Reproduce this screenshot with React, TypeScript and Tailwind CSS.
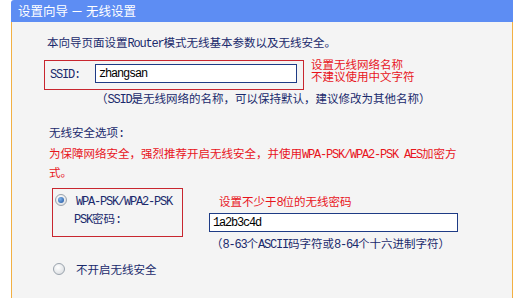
import React from "react";

function T({ s }: { s: string }) {
  const parts = s.split(/([\x20-\x7e]+)/);
  return (
    <>
      {parts.map((p, i) =>
        /^[\x20-\x7e]+$/.test(p) ? (
          <span key={i} className="font-['Liberation_Mono'] text-[12px] leading-none tracking-[-1.2px]">
            {p}
          </span>
        ) : (
          <React.Fragment key={i}>{p}</React.Fragment>
        )
      )}
    </>
  );
}

function Radio({ checked }: { checked?: boolean }) {
  return (
    <span className="flex h-[12px] w-[12px] shrink-0 items-center justify-center rounded-full border border-[#9aa3ad] bg-[radial-gradient(circle_at_40%_35%,#ffffff,#d4d8dc)]">
      {checked ? (
        <span className="h-[6px] w-[6px] rounded-full bg-[radial-gradient(circle_at_35%_35%,#7fb4ec,#1d4f9a)]" />
      ) : null}
    </span>
  );
}

export default function App() {
  return (
    <div className="h-[298px] w-[523px] overflow-hidden bg-white font-['Noto_Sans_CJK_SC',sans-serif] text-[11.5px] text-[#1a2a6c]">
      <div className="ml-[11px] flex h-[298px] w-[502px] flex-col">
        <div className="flex h-[22px] items-center rounded-tl-[3px] bg-[#5d8df3] pl-[7px] text-[12.5px] leading-none text-white">
          设置向导 － 无线设置
        </div>
        <div className="flex flex-1 flex-col border-l border-r border-[#f2b043] bg-[#f4f4f4]">
          <div className="ml-[35px] mt-[12px] h-[16px] leading-[16px]">
            <T s="本向导页面设置Router模式无线基本参数以及无线安全。" />
          </div>
          <div className="mt-[10px] flex items-start">
            <div className="ml-[32px] flex h-[30px] w-[260px] items-start border border-[#c8262f] pl-[5px] pt-[3px]">
              <span className="mt-[1px] h-[16px] w-[45px] leading-[16px]">
                <T s="SSID:" />
              </span>
              <div className="flex h-[19px] w-[202px] items-center border border-[#1e3b85] bg-white pl-[3px] leading-none text-black">
                <T s="zhangsan" />
              </div>
            </div>
            <div className="ml-[7px] mt-[-2px] text-[11.5px] leading-[12px] text-[#e8141c]">
              <div className="h-[12px]">设置无线网络名称</div>
              <div className="h-[12px]">不建议使用中文字符</div>
            </div>
          </div>
          <div className="ml-[84px] h-[16px] leading-[16px]">
            <T s="（SSID是无线网络的名称，可以保持默认，建议修改为其他名称）" />
          </div>
          <div className="ml-[37px] mt-[18px] h-[16px] leading-[16px]">
            <T s="无线安全选项:" />
          </div>
          <div className="ml-[37px] mt-[4px] text-[#e8141c]">
            <div className="h-[19px] leading-[19px]">
              <T s="为保障网络安全，强烈推荐开启无线安全，并使用WPA-PSK/WPA2-PSK AES加密方" />
            </div>
            <div className="h-[19px] leading-[19px]">式。</div>
          </div>
          <div className="mt-[6px] flex items-start">
            <div className="ml-[40px] flex h-[49px] w-[131px] flex-col border border-[#c8262f] pl-[2px] pt-[3px]">
              <div className="flex h-[16px] items-center gap-[9px] leading-[16px]">
                <Radio checked />
                <span>
                  <T s="WPA-PSK/WPA2-PSK" />
                </span>
              </div>
              <div className="ml-[19px] mt-[2px] h-[16px] leading-[16px]">
                <T s="PSK密码:" />
              </div>
            </div>
            <div className="ml-[26px] flex flex-col">
              <div className="mt-[5px] h-[16px] pl-[10px] leading-[16px] text-[#e8141c]">
                <T s="设置不少于8位的无线密码" />
              </div>
              <div className="mt-[4px] flex h-[19px] w-[249px] items-center border border-[#1e3b85] bg-white pl-[3px] leading-none text-black">
                <T s="1a2b3c4d" />
              </div>
              <div className="ml-[2px] mt-[3px] h-[16px] leading-[16px]">
                <T s="（8-63个ASCII码字符或8-64个十六进制字符）" />
              </div>
            </div>
          </div>
          <div className="ml-[41px] mt-[10px] flex h-[16px] items-center gap-[11px] leading-[16px]">
            <Radio />
            <span>不开启无线安全</span>
          </div>
        </div>
      </div>
    </div>
  );
}
